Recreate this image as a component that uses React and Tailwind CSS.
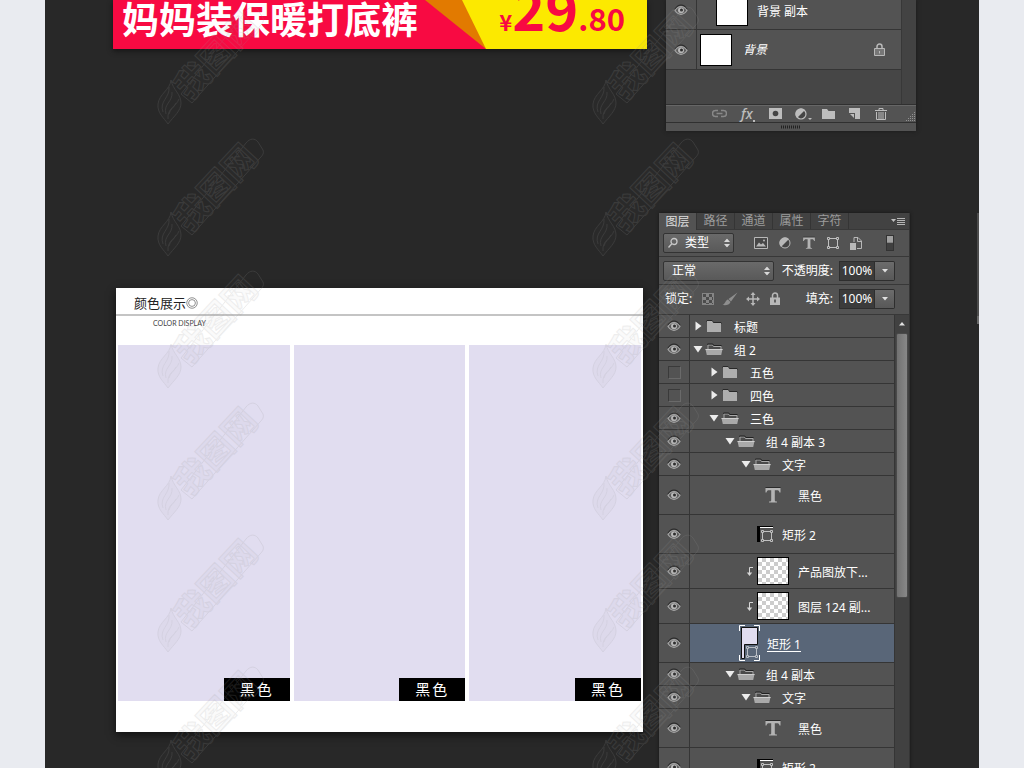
import { useState } from "react"

const uiFont = "font-['Noto_Sans','Noto_Sans_CJK_SC',sans-serif]"
const cnFont = "font-['Noto_Sans_CJK_SC',sans-serif]"

const layers = [
  { kind: "group", depth: 0, name: "标题" },
  { kind: "group", depth: 0, name: "组 2", open: true },
  { kind: "group", depth: 1, name: "五色", hidden: true },
  { kind: "group", depth: 1, name: "四色", hidden: true },
  { kind: "group", depth: 1, name: "三色", open: true },
  { kind: "group", depth: 2, name: "组 4 副本 3", open: true },
  { kind: "group", depth: 3, name: "文字", open: true },
  { kind: "text", depth: 4, name: "黑色" },
  { kind: "shape", depth: 4, name: "矩形 2" },
  { kind: "clip", depth: 4, name: "产品图放下..." },
  { kind: "clip", depth: 4, name: "图层 124 副..." },
  { kind: "selected", depth: 3, name: "矩形 1" },
  { kind: "group", depth: 2, name: "组 4 副本", open: true },
  { kind: "group", depth: 3, name: "文字", open: true },
  { kind: "text", depth: 4, name: "黑色" },
  { kind: "shape", depth: 4, name: "矩形 2" },
]

const rowHeights = {
  group: "h-[23px]",
  text: "h-[39px]",
  shape: "h-[39px]",
  clip: "h-[35px]",
  selected: "h-[39px]",
}

const indents = ["pl-0", "pl-4", "pl-8", "pl-12", "pl-16"]

function EyeIcon() {
  return (
    <svg width="14" height="12" viewBox="0 0 14 12" fill="none">
      <path d="M1 5C3 2 5 1 7 1s4 1 6 4" stroke="#292929" strokeWidth="1.2" />
      <path d="M1 6.5C3 3.600 5 2.500 7 2.500s4 1.100 6 4C11 9.400 9 10.300 7 10.300S3 9.400 1 6.500Z" fill="#5d5d5d" stroke="#a6a6a6" strokeWidth="1.2" />
      <circle cx="7" cy="6.200" r="3" fill="#b8b8b8" />
      <circle cx="7.500" cy="5.900" r="1.500" fill="#2d2d2d" />
    </svg>
  )
}

function FolderIcon({ open }) {
  if (open) {
    return (
      <svg width="18" height="13" viewBox="0 0 18 13">
        <path d="M3 6V2h4.500l1 1.500H16V6" fill="#4b4b4b" stroke="#a8a8a8" />
        <path d="M2.500 1.500V1h5.300l1 1.500h7.700" fill="none" stroke="#222" />
        <path d="M.5 6h17l-1.300 6H1.800Z" fill="#a9a9a9" />
        <path d="M.5 6h17v1H.7Z" fill="#cfcfcf" />
      </svg>
    )
  }
  return (
    <svg width="16" height="13" viewBox="0 0 16 13">
      <path d="M1 2V.5h5L7.500 2.500H15V4" fill="none" stroke="#292929" />
      <path d="M1 1h5l1.300 2H15v9H1Z" fill="#aeaeae" />
    </svg>
  )
}

function Caret({ open }) {
  return (
    <svg width="10" height="10" viewBox="0 0 10 10" fill="#ececec">
      {open ? <path d="M.5 2h9L5 8.500Z" /> : <path d="M2.500.5v9L8.500 5Z" />}
    </svg>
  )
}

function TypeIcon({ size = 18 }) {
  return (
    <svg width={size} height={size} viewBox="0 0 18 18">
      <path d="M1.500 1.500h15" stroke="#2b2b2b" />
      <path d="M1.500 2h15v4.500h-1c-.3-1.700-1-2.300-2.500-2.300h-2.200v10.100c0 .9.500 1.200 2.200 1.300v.9H5v-.9c1.700-.1 2.200-.4 2.200-1.300V4.200H5C3.500 4.200 2.800 4.800 2.500 6.500h-1Z" fill="#b4b4b4" />
    </svg>
  )
}

function FrameIcon() {
  return (
    <svg width="12" height="12" viewBox="0 0 12 12" fill="none" stroke="#c0c0c0">
      <path d="M3 1.500h6M3 10.500h6M1.500 3v6M10.500 3v6" />
      <path d="M.5.5h2v2h-2ZM9.500.5h2v2h-2ZM.5 9.500h2v2h-2ZM9.500 9.500h2v2h-2Z" />
    </svg>
  )
}

function Updown() {
  return (
    <svg className="pointer-events-none absolute right-1 top-1/2 -translate-y-1/2" width="6" height="9" viewBox="0 0 6 9" fill="#d8d8d8">
      <path d="M0 3.500 3 0l3 3.500ZM0 5.500h6L3 9Z" />
    </svg>
  )
}

function Thumbnail({ kind }) {
  if (kind === "text") {
    return <span className="ml-[3px] flex w-8 justify-center"><TypeIcon /></span>
  }
  if (kind === "shape") {
    return (
      <span className="ml-[3px] flex size-4 items-end justify-end border-l-[3px] border-t border-black bg-[#535353] shadow-[inset_0_1px_0_#fff]">
        <FrameIcon />
      </span>
    )
  }
  if (kind === "selected") {
    return (
      <svg className="ml-px" width="21" height="36" viewBox="0 0 21 36" fill="none">
        <path d="M.5 6V.5H6M15 .5h5.500V6M20.500 30v5.500H15M6 35.500H.5V30" stroke="#fff" />
        <path d="M2.500 2.500h16v17h-13v14h-3Z" fill="#e1ddf0" stroke="#111" />
        <path d="M9 22.500h8M9 31.500h8M8.500 23v8M17.500 23v8" stroke="#b9bdc4" />
        <path d="M7.500 21.500h2v2h-2ZM16.500 21.500h2v2h-2ZM7.500 30.500h2v2h-2ZM16.500 30.500h2v2h-2Z" stroke="#b9bdc4" />
      </svg>
    )
  }
  return (
    <span className="relative ml-[3px] block h-7 w-8 border border-black bg-[conic-gradient(#ccc_25%,#fff_0_50%,#ccc_0_75%,#fff_0)] bg-[length:8px_8px]">
      <svg className="absolute -left-3 top-2" width="8" height="11" viewBox="0 0 8 11" fill="none">
        <path d="M7 1.500H3.500V7" stroke="#d6d6d6" />
        <path d="M.8 6.500h5.400L3.500 10Z" fill="#d6d6d6" />
      </svg>
    </span>
  )
}

function LayerRow({ layer }) {
  const [visible, setVisible] = useState(!layer.hidden)
  const group = layer.kind === "group"
  const selected = layer.kind === "selected"
  return (
    <li className={`flex shrink-0 ${rowHeights[layer.kind]}`}>
      <button
        aria-label={`${layer.name} 可见`}
        aria-pressed={visible}
        onClick={() => setVisible(!visible)}
        className="flex w-[31px] shrink-0 items-center justify-center border-b border-r border-[#353535]"
      >
        {visible ? <EyeIcon /> : <span className="size-[13px] border border-[#3a3a3a] border-b-[#6a6a6a] border-r-[#6a6a6a]" />}
      </button>
      <div className={`flex min-w-0 grow items-center border-b border-[#353535] ${selected ? "bg-[#596678]" : ""}`}>
        <div className={`flex items-center ${indents[layer.depth]}`}>
          {group ? (
            <>
              <span className="ml-[3px] w-3"><Caret open={layer.open} /></span>
              <span className="flex w-[18px] justify-center"><FolderIcon open={layer.open} /></span>
            </>
          ) : (
            <Thumbnail kind={layer.kind} />
          )}
          <span className={`whitespace-nowrap pt-[3px] ${group ? "ml-[11px]" : selected ? "ml-[7px] underline underline-offset-2" : layer.kind === "shape" ? "ml-[9px]" : "ml-[9px]"}`}>
            {layer.name}
          </span>
        </div>
      </div>
    </li>
  )
}

function PercentField({ id, label }) {
  return (
    <div className="flex items-center">
      <label htmlFor={id} className="pr-[6px]">{label}</label>
      <input id={id} defaultValue="100%" className="h-5 w-9 border border-[#2e2e2e] bg-[#3b3b3b] text-center text-white" />
      <button aria-label={`${label}选项`} className="flex h-5 w-5 items-center justify-center rounded-r-xs border border-l-0 border-[#2e2e2e] bg-linear-to-b from-[#6c6c6c] to-[#585858]">
        <svg width="6" height="4" viewBox="0 0 6 4" fill="#e0e0e0"><path d="M0 0h6L3 3.500Z" /></svg>
      </button>
    </div>
  )
}

function FilterIcons() {
  return (
    <div className="flex items-center gap-[11px] text-[#b8b8b8]">
      <button aria-label="像素图层">
        <svg width="14" height="12" viewBox="0 0 14 12">
          <path d="M.5.5h13v11H.5Z" fill="#474747" stroke="currentColor" />
          <path d="m2 9.500 3-4 2 2 2-1.500 3 3.500Z" fill="currentColor" /><circle cx="10" cy="3.500" r="1" fill="currentColor" />
        </svg>
      </button>
      <button aria-label="调整图层">
        <svg width="12" height="12" viewBox="0 0 12 12"><circle cx="6" cy="6" r="5" fill="#454545" stroke="currentColor" /><path d="M2 10A5.500 5.500 0 0 1 10 2Z" fill="currentColor" /></svg>
      </button>
      <button aria-label="文字图层"><TypeIcon size={14} /></button>
      <button aria-label="形状图层"><FrameIcon /></button>
      <button aria-label="智能对象">
        <svg width="12" height="13" viewBox="0 0 12 13" fill="none" stroke="currentColor">
          <path d="M4 5V.5h4L11.500 4v7.500H7M7.500.5v4h4" /><path d="M0 6h6v7H0Z" fill="currentColor" stroke="none" />
        </svg>
      </button>
    </div>
  )
}

function LayersPanel() {
  const tabs = ["图层", "路径", "通道", "属性", "字符"]
  return (
    <section className={`flex h-[560px] w-[251px] flex-col overflow-hidden border-r border-[#353535] bg-[#535353] text-xs text-white shadow-[0_0_3px_#151515] ${uiFont}`}>
      <div className="flex h-[17px] shrink-0 items-stretch border-b border-[#383838] bg-[#424242]">
        {tabs.map((tab, i) => (
          <button key={tab} className={`w-[38px] border-r border-[#353535] leading-4 ${i === 0 ? "-mb-px bg-[#535353] text-[#dedede]" : "text-[#9c9c9c]"}`}>
            {tab}
          </button>
        ))}
        <button aria-label="面板菜单" className="ml-auto pr-1">
          <svg width="14" height="9" viewBox="0 0 14 9"><path d="M0 2h5L2.500 5Z" fill="#c0c0c0" /><path d="M6 1.500h8M6 3.500h8M6 5.500h8M6 7.500h8" stroke="#b5b5b5" /></svg>
        </button>
      </div>
      <div className="flex h-[27px] shrink-0 items-center border-b border-[#383838] pl-1 pr-3">
        <div className="relative">
          <svg className="pointer-events-none absolute left-1 top-1" width="12" height="12" viewBox="0 0 12 12" fill="none" stroke="#c8c8c8" strokeWidth="1.300"><circle cx="7" cy="4.500" r="3" /><path d="M4.800 6.800 1.500 10.500" /></svg>
          <select aria-label="筛选" className="h-5 w-[71px] appearance-none rounded-xs border border-[#333] bg-linear-to-b from-[#6a6a6a] to-[#595959] pl-[21px] leading-4">
            <option>类型</option>
          </select>
          <Updown />
        </div>
        <div className="ml-5"><FilterIcons /></div>
        <button aria-label="筛选开关" className="ml-auto mr-[3px] h-4 w-2 border border-[#333] bg-linear-to-b from-[#a0a0a0] from-45% to-[#404040] to-50%" />
      </div>
      <div className="flex h-7 shrink-0 items-center border-b border-[#383838] pl-1">
        <div className="relative">
          <select aria-label="混合模式" className="h-5 w-[111px] appearance-none rounded-xs border border-[#333] bg-linear-to-b from-[#6a6a6a] to-[#595959] pl-2 leading-4">
            <option>正常</option>
          </select>
          <Updown />
        </div>
        <div className="ml-auto pr-[14px]"><PercentField id="opacity" label="不透明度:" /></div>
      </div>
      <div className="flex h-[30px] shrink-0 items-center border-b border-[#383838] pb-[2px] pl-[6px]">
        <span>锁定:</span>
        <div className="ml-[10px] flex items-center gap-2 text-[#b8b8b8]">
          <button aria-label="锁定透明像素"><span className="block size-3 border border-[#858585] bg-[conic-gradient(#858585_25%,#4c4c4c_0_50%,#858585_0_75%,#4c4c4c_0)] bg-[length:6px_6px]" /></button>
          <button aria-label="锁定图像像素">
            <svg width="16" height="14" viewBox="0 0 16 14" fill="#8e8e8e"><path d="M15.500.5 9 9.500 6.500 7ZM6 7.500l2.500 2.500C7.500 13 4 13.500.5 13 3 12.300 3.500 8 6 7.500Z" /></svg>
          </button>
          <button aria-label="锁定位置">
            <svg width="14" height="14" viewBox="0 0 14 14"><path d="M7 2v10M2 7h10" stroke="currentColor" strokeWidth="1.500" /><path d="m7 0 2.500 3h-5ZM7 14l2.500-3h-5ZM0 7l3-2.500v5ZM14 7l-3-2.500v5Z" fill="currentColor" /></svg>
          </button>
          <button aria-label="锁定全部" className="ml-[2px]">
            <svg width="10" height="13" viewBox="0 0 10 13"><path d="M2.500 6V3.500a2.500 2.500 0 0 1 5 0V6" fill="none" stroke="currentColor" strokeWidth="1.500" /><path d="M0 5.500h10V13H0Z" fill="currentColor" /><path d="M5 7.500v3" stroke="#444" strokeWidth="1.500" /></svg>
          </button>
        </div>
        <div className="ml-auto pr-[14px]"><PercentField id="fill" label="填充:" /></div>
      </div>
      <div className="flex min-h-0 grow">
        <ul className="flex min-w-0 grow flex-col overflow-hidden border-r border-[#353535]">
          {layers.map((layer, i) => <LayerRow key={i} layer={layer} />)}
        </ul>
        <div className="flex w-[14px] flex-col items-center bg-[#414141]">
          <svg className="my-[6px] shrink-0" width="6" height="6" viewBox="0 0 6 6" fill="#e0e0e0"><path d="M0 4.500 3 1l3 3.500Z" /></svg>
          <div className="h-[265px] w-3 rounded-xs border border-[#4a4a4a] bg-linear-to-r from-[#727272] to-[#888]" />
        </div>
      </div>
    </section>
  )
}

function FooterIcons() {
  return (
    <div className="flex h-[19px] shrink-0 items-center gap-3 border-y border-[#303030] pl-[46px] text-[#bdbdbd] shadow-[inset_0_1px_0_#666]">
      <button aria-label="链接图层" className="text-[#888]">
        <svg width="15" height="9" viewBox="0 0 15 9" fill="none" stroke="currentColor" strokeWidth="1.500"><path d="M6 1.500H3.500a3 3 0 0 0 0 6H6M9 1.500h2.500a3 3 0 0 1 0 6H9M4.500 4.500h6" /></svg>
      </button>
      <button aria-label="图层样式" className="ml-[2px] flex w-4 items-end font-['Noto_Sans',sans-serif] text-sm font-medium italic leading-4">
        fx<span className="size-[2px] shrink-0 bg-current" />
      </button>
      <button aria-label="图层蒙版">
        <svg width="13" height="11" viewBox="0 0 13 11"><path d="M0 0h13v11H0Z" fill="currentColor" /><circle cx="6.500" cy="5.500" r="2.800" fill="#444" /></svg>
      </button>
      <button aria-label="调整图层" className="ml-px">
        <svg width="17" height="12" viewBox="0 0 17 12"><circle cx="6" cy="6" r="5" fill="#454545" stroke="currentColor" strokeWidth="1.200" /><path d="M2 10A5.500 5.500 0 0 1 10 2ZM13 10h4l-2 2Z" fill="currentColor" /></svg>
      </button>
      <button aria-label="新建组" className="-ml-[2px]">
        <svg width="13" height="11" viewBox="0 0 13 11"><path d="M0 1h5l1.500 2H13v8H0Z" fill="currentColor" /></svg>
      </button>
      <button aria-label="新建图层" className="ml-[2px]">
        <svg width="11" height="11" viewBox="0 0 11 11" fill="currentColor"><path d="M0 0h11v11H6V5H0ZM1 6h4v4Z" /></svg>
      </button>
      <button aria-label="删除图层" className="ml-[3px]">
        <svg width="12" height="12" viewBox="0 0 12 12" fill="none" stroke="currentColor"><path d="M0 2.500h12M4 2V.5h4V2M1.500 4v7.500h9V4M4 4v7M6 4v7M8 4v7" /></svg>
      </button>
      <svg className="ml-auto self-end" width="10" height="10" viewBox="0 0 10 10" stroke="#929292" strokeDasharray="1 1"><path d="M8 .5h2M6 2.500h4M4 4.500h6M2 6.500h8M0 8.500h10" /></svg>
    </div>
  )
}

function BackgroundPanel() {
  return (
    <section className={`flex h-[131px] w-[250px] flex-col overflow-hidden bg-[#535353] text-xs text-white shadow-[0_0_4px_#1a1a1a] ${uiFont}`}>
      <div className="flex min-h-0 grow bg-[#464646]">
        <ul className="grow border-r border-[#383838]">
          <li className="flex h-[30px] border-b border-[#353535] bg-[#535353]">
            <button aria-label="背景 副本 可见" className="flex w-[31px] items-center justify-center border-r border-[#353535] pb-[9px]"><EyeIcon /></button>
            <span className="ml-[19px] h-[26px] w-8 border border-t-0 border-black bg-white" />
            <span className="ml-[9px] mt-1 leading-4">背景 副本</span>
          </li>
          <li className="flex h-10 items-center border-b border-[#353535] bg-[#535353]">
            <button aria-label="背景 可见" className="flex w-[31px] items-center justify-center self-stretch border-r border-[#353535]"><EyeIcon /></button>
            <span className="ml-[3px] size-8 border border-black bg-white" />
            <span className="ml-[11px] italic">背景</span>
            <svg className="ml-auto mr-4" width="11" height="13" viewBox="0 0 11 13" fill="none" stroke="#b9b9b9"><path d="M3 5.500V3.500a2.500 2.500 0 0 1 5 0v2" strokeWidth="1.500" /><path d="M.5 5.500h10v7H.5Z" fill="#777" /><path d="M5.500 8v2.500" /></svg>
          </li>
        </ul>
        <div className="w-[14px] bg-[#434343]" />
      </div>
      <FooterIcons />
      <div className="flex h-2 shrink-0 justify-center pt-[2px]">
        <svg width="20" height="4" viewBox="0 0 20 4" stroke="#222" strokeDasharray="1 1" strokeWidth="3"><path d="M0 2h20" /></svg>
      </div>
    </section>
  )
}

function PromoBanner() {
  return (
    <header className={`relative flex h-[49px] items-end justify-between overflow-hidden bg-[#f80a42] font-bold shadow-[0_2px_5px_#151515] ${cnFont}`}>
      <svg className="absolute right-0 top-0" width="222" height="49" viewBox="0 0 222 49">
        <path d="M0 0h45l16 49Z" fill="#e27a00" />
        <path d="M37 0h185v49H61Z" fill="#fce900" />
      </svg>
      <h1 className="relative pl-[9px] text-[37px] leading-[62px] text-white">妈妈装保暖打底裤</h1>
      <p className="relative flex items-baseline pr-[22px] leading-[56px] text-[#f80a42]">
        <span className="text-[22px]">¥</span>
        <span className="text-[56px]">29</span>
        <span className="text-[31px]">.80</span>
      </p>
    </header>
  )
}

function ColorDisplay() {
  return (
    <section className={`ml-[3px] mr-1 h-[444px] bg-white text-[#222] shadow-[0_3px_8px_#111] ${cnFont}`}>
      <div className="flex h-7 items-center border-b-2 border-[#c4c4c4] pl-[18px] pt-1 text-[13px]">
        <h2>颜色展示</h2>
        <svg width="12" height="12" viewBox="0 0 13 13" fill="none" stroke="#555" strokeWidth=".7"><circle cx="6.500" cy="6.500" r="5.700" /><circle cx="6.500" cy="6.500" r="3.700" /></svg>
      </div>
      <p className="h-[29px] pl-[37px] pt-[3px] font-['Lato',sans-serif] text-[7px] leading-2 text-[#444]">COLOR DISPLAY</p>
      <div className="grid grid-cols-3 gap-1 px-[2px]">
        {[1, 2, 3].map((n) => (
          <div key={n} className="flex h-[356px] items-end justify-end bg-[#e1ddf0]">
            <span className="w-[66px] bg-black pb-px text-center text-[15px] leading-[22px] tracking-[2px] text-white">黑色</span>
          </div>
        ))}
      </div>
    </section>
  )
}

function Watermark() {
  return (
    <svg className="h-[132px] w-[120px] overflow-visible" viewBox="0 0 120 132" fill="none" aria-hidden="true">
      <g stroke="#999" strokeWidth="1" opacity=".17">
        <path d="M21 80c2 10 10 14 10 23 0 8-7 13-13 21-4-6-11-11-10-20 1-10 12-14 13-24Z" fill="#777" fillOpacity=".2" />
        <path d="M19 87c1 11-10 14-6 25M22 92c1 10-9 12-6 22M29 99c-3 8-12 9-11 20M26 103c-2 5-6 6-7 11" />
        <path d="m31 94 65-83c4-5 9-5 12-1l5 8c1 3 0 5-3 8l-68 77Z" />
        <text x="40" y="101" transform="rotate(-47 40 101)" className="font-['Noto_Sans_CJK_SC',sans-serif] text-[34px] font-bold" fill="#777" fillOpacity=".2">我图网</text>
      </g>
    </svg>
  )
}

export default function App() {
  return (
    <div className="relative h-screen overflow-hidden bg-[#e9ebf0]">
      <main className="mx-[45px] flex h-full items-start bg-[#282828] pl-[68px]">
        <div className="flex w-[534px] shrink-0 flex-col gap-[239px]">
          <PromoBanner />
          <ColorDisplay />
        </div>
        <div className="ml-3 flex shrink-0 flex-col gap-[82px]">
          <div className="pl-[7px]"><BackgroundPanel /></div>
          <LayersPanel />
        </div>
        <div className="ml-auto mt-[213px] h-[111px] w-[2px] border-b-8 border-[#6a6a6a] bg-[#4c4c4c]" />
      </main>
      <div className="pointer-events-none absolute left-[150px] top-0 grid grid-cols-[435px_120px]">
        {Array.from({ length: 12 }, (_, i) => <Watermark key={i} />)}
      </div>
    </div>
  )
}
